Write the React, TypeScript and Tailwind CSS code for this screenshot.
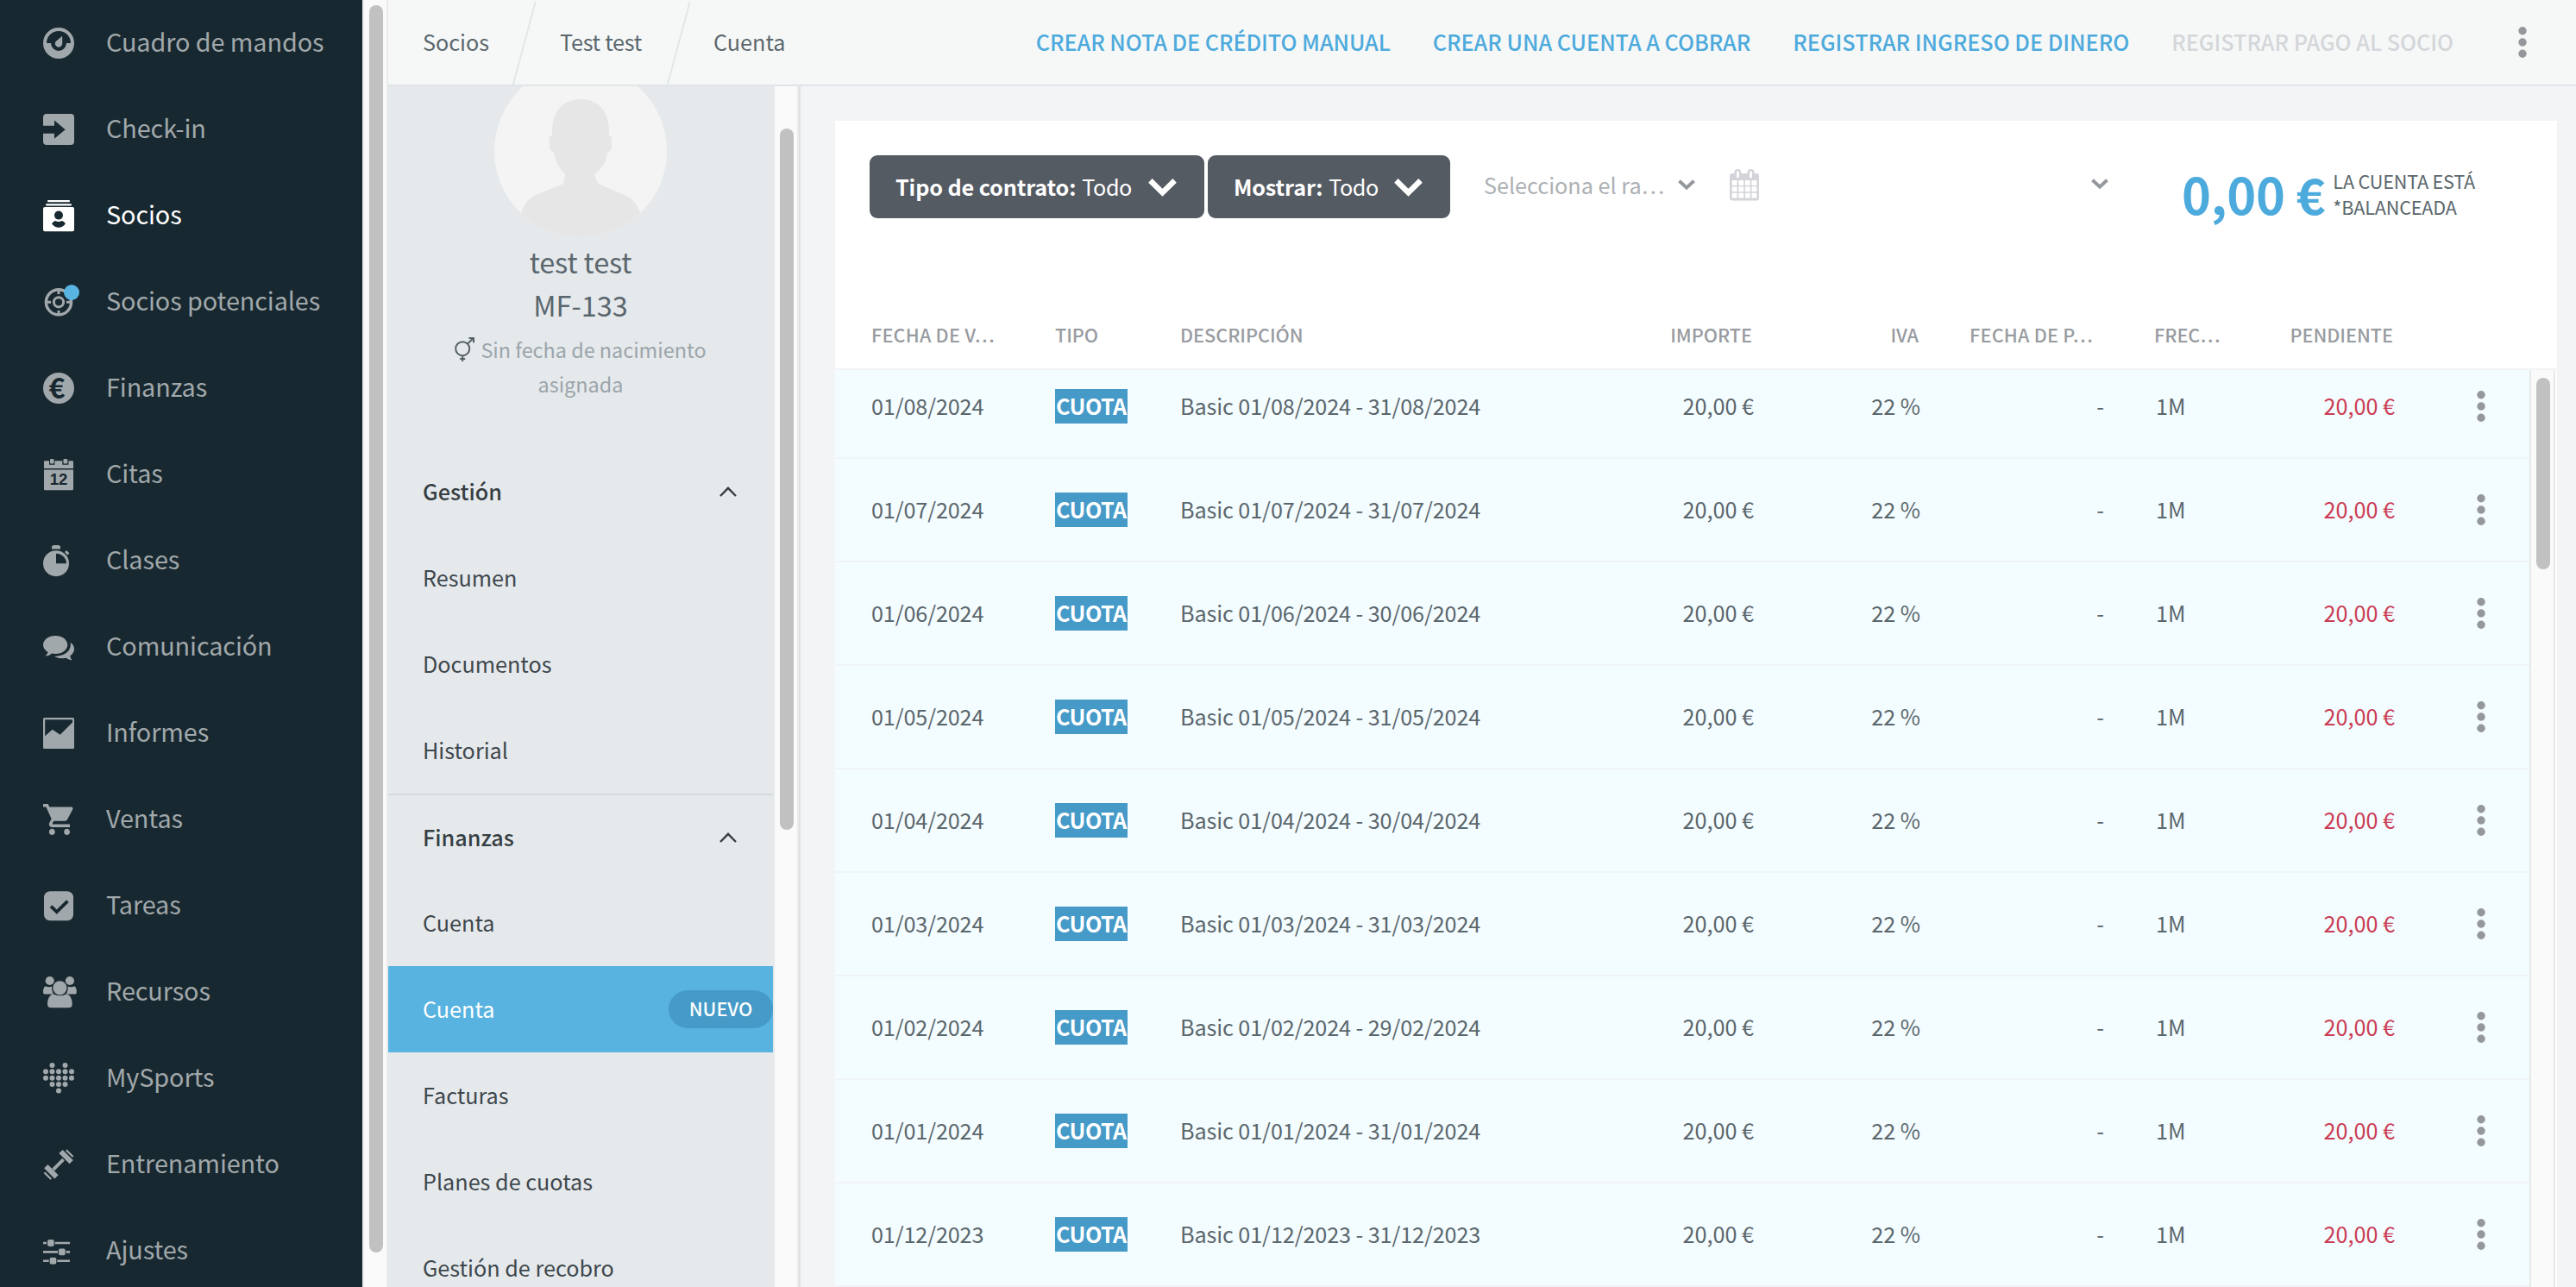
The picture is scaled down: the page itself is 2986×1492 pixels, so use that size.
import type { ReactNode } from "react";

const DARK = "#182830";

function NavIcon({ children }: { children: ReactNode }) {
  return (
    <svg viewBox="0 0 36 36" className="size-9 shrink-0 overflow-visible" fill="currentColor">
      {children}
    </svg>
  );
}

const heartRows = [[1, 3], [0, 1, 2, 3, 4], [0, 1, 2, 3, 4], [1, 2, 3], [2]];

const navItems: { label: string; active?: boolean; icon: ReactNode }[] = [
  {
    label: "Cuadro de mandos",
    icon: (
      <path
        fillRule="evenodd"
        d="M18 0a18 18 0 1 1 0 36a18 18 0 1 1 0-36zM4 18a14 14 0 0 1 28 0h-5a9 9 0 0 1-18 0zM22.2 9.7V19a4.2 4.2 0 1 1-7.5-3.1z"
      />
    ),
  },
  {
    label: "Check-in",
    icon: (
      <path d="M4 0H32a4 4 0 0 1 4 4V32a4 4 0 0 1-4 4H4a4 4 0 0 1-4-4V22.8H13V28.7L25.7 18.2L13 7.6V13.7H0V4a4 4 0 0 1 4-4z" />
    ),
  },
  {
    label: "Socios",
    active: true,
    icon: (
      <>
        <rect x="5" y="0" width="26" height="2.2" rx="1" />
        <rect x="3" y="4.2" width="30" height="2.4" rx="1" />
        <path
          fillRule="evenodd"
          d="M2 8H34a2 2 0 0 1 2 2V34.3a2 2 0 0 1-2 2H2a2 2 0 0 1-2-2V10a2 2 0 0 1 2-2zM18 12.6a5 5 0 1 0 0 10a5 5 0 1 0 0-10zM10 27.2Q12 24.2 14.3 24Q18 26 21.7 24Q24 24.2 26 27.2Q22.5 31.7 18 31.7T10 27.2z"
        />
      </>
    ),
  },
  {
    label: "Socios potenciales",
    icon: (
      <>
        <g fill="none" stroke="currentColor">
          <circle cx="18" cy="18.3" r="14.6" strokeWidth="3.4" />
          <circle cx="18" cy="18.3" r="5.6" strokeWidth="3" />
          <path d="M18 4v5M18 28v5M4 18.3h5M27 18.3h5" strokeWidth="3" />
        </g>
        <circle cx="33" cy="7" r="9" fill="#5ab4e2" />
      </>
    ),
  },
  {
    label: "Finanzas",
    icon: (
      <>
        <circle cx="18" cy="18" r="18" />
        <text x="16" y="29.8" textAnchor="middle" fontSize="32" fontWeight="700" fill={DARK}>€</text>
      </>
    ),
  },
  {
    label: "Citas",
    icon: (
      <>
        <path d="M2 2.3H7V6.7H13.4V2.3H22.3V6.7H29.4V2.3H34a1 1 0 0 1 1 1V11H1V3.3a1 1 0 0 1 1-1z" />
        <rect x="8" y="0" width="4.5" height="5.4" rx="1.2" />
        <rect x="23.5" y="0" width="4.7" height="5.4" rx="1.2" />
        <path d="M1 12.6H35V34.8a1.5 1.5 0 0 1-1.5 1.5H2.5A1.5 1.5 0 0 1 1 34.8z" />
        <text x="18" y="30.3" textAnchor="middle" fontSize="18.5" fontWeight="700" fill={DARK} className="font-['Liberation_Sans']">12</text>
      </>
    ),
  },
  {
    label: "Clases",
    icon: (
      <>
        <path d="M10 4.6V2.5a2.5 2.5 0 0 1 2.5-2.5H17.5a2.5 2.5 0 0 1 2.5 2.5V4.6z" />
        <path fillRule="evenodd" d="M15 6.2a15 15 0 1 1 0 30a15 15 0 1 1 0-30zM15 9.7V21.2H27A12 11.7 0 0 0 15 9.7z" />
        <path d="M26 7L29.4 10.4" stroke="currentColor" strokeWidth="3" />
      </>
    ),
  },
  {
    label: "Comunicación",
    icon: (
      <>
        <path d="M14.2 5C22.2 5 28.3 9.7 28.3 15.5S22.2 26 14.2 26C12.7 26 11.4 25.8 10.1 25.5C8 27.4 5.2 28.5 2.6 28.4C4.2 27 5.3 25.500 5.6 24C2.1 22 0 19 0 15.5C0 9.700 6.2 5 14.2 5z" />
        <path d="M31.6 12.8C34.3 14.6 36 17.2 36 20.4C36 23.6 34.3 26.2 31.3 28.2C31.5 30.2 32.2 31.5 33.5 33.4C31 33.2 28.6 32.2 26.8 30.8C21.5 31.7 16.8 31 13 28.9C25 29 33.400 22.5 31.6 12.8z" />
      </>
    ),
  },
  {
    label: "Informes",
    icon: (
      <path
        fillRule="evenodd"
        d="M1.5 0H34.5A1.5 1.5 0 0 1 36 1.5V34.5A1.5 1.5 0 0 1 34.5 36H1.5A1.5 1.5 0 0 1 0 34.5V1.5A1.5 1.5 0 0 1 1.5 0zM2.2 2.3V21.3L10.7 13.7L19.7 19.7L34 5.5V2.3z"
      />
    ),
  },
  {
    label: "Ventas",
    icon: (
      <svg viewBox="1 2 20.9 20" width="36" height="36" preserveAspectRatio="none">
        <path d="M7 18c-1.1 0-1.99.9-1.99 2S5.9 22 7 22s2-.9 2-2-.9-2-2-2zM1 2v2h2l3.6 7.59-1.35 2.45c-.16.28-.25.61-.25.96 0 1.1.9 2 2 2h12v-2H7.42c-.14 0-.25-.11-.25-.25l.03-.12.9-1.63h7.45c.75 0 1.41-.41 1.75-1.03l3.58-6.49c.08-.14.12-.31.12-.48 0-.55-.45-1-1-1H5.21l-.94-2H1zm16 16c-1.1 0-1.99.9-1.99 2s.89 2 1.99 2 2-.9 2-2-.9-2-2-2z" />
      </svg>
    ),
  },
  {
    label: "Tareas",
    icon: (
      <>
        <rect x="1" y="1.3" width="34" height="34" rx="7" />
        <path d="M9 18.6L15.8 25.2L28.4 12.6" fill="none" stroke={DARK} strokeWidth="3.8" />
      </>
    ),
  },
  {
    label: "Recursos",
    icon: (
      <>
        <circle cx="7.7" cy="5" r="5.1" />
        <circle cx="30.9" cy="5" r="5.1" />
        <path d="M2.5 11.3Q6 12.8 10.5 11.6Q9.8 17 12.2 20.6H2.5Q0 20.6 0 18Q0 13 2.5 11.3zM36.3 11.3Q32.8 12.8 28.2 11.6Q29 17 26.6 20.6H36.3Q38.8 20.6 38.8 18Q38.8 13 36.3 11.3z" />
        <circle cx="19.4" cy="13.3" r="8.7" stroke={DARK} strokeWidth="1.2" />
        <path d="M11.5 20.2Q19.4 24.5 27.3 20.2Q33.6 22 33.7 32Q33.7 36.3 29.5 36.3H9.3Q5 36.3 5 32Q5.2 22 11.5 20.2z" />
      </>
    ),
  },
  {
    label: "MySports",
    icon: (
      <>
        {heartRows.map((cols, r) =>
          cols.map((c) => <circle key={`${r}-${c}`} cx={3 + c * 7.5} cy={3 + r * 7.35} r="3" />),
        )}
      </>
    ),
  },
  {
    label: "Entrenamiento",
    icon: (
      <g stroke="currentColor">
        <path d="M11.8 23.8L23.5 12.1" strokeWidth="3.8" />
        <path d="M20.5 3L32.7 15.2M3.3 20.2L15.5 32.4" strokeWidth="6" />
        <path d="M26.8 1.2L34.6 9M1.4 27.2L9.2 35" strokeWidth="2.3" />
      </g>
    ),
  },
  {
    label: "Ajustes",
    icon: (
      <>
        <path d="M0 9H31M0 19.4H31M0 29.7H31" stroke="currentColor" strokeWidth="2.6" />
        <g stroke={DARK} strokeWidth="1">
          <rect x="4.6" y="4.6" width="8.6" height="8.8" rx="2.4" />
          <rect x="17.6" y="15" width="8.6" height="8.8" rx="2.4" />
          <rect x="7.2" y="25.3" width="8.6" height="8.8" rx="2.4" />
        </g>
      </>
    ),
  },
];

function Sidebar() {
  return (
    <nav className="w-[420px] shrink-0 overflow-hidden bg-[#182830]">
      {navItems.map((item) => (
        <div
          key={item.label}
          className={`flex h-[100px] items-center gap-9 pl-[50px] ${item.active ? "text-white" : "text-[#a1a8ab]"}`}
        >
          <NavIcon>{item.icon}</NavIcon>
          <span className="pb-[5px] pl-px text-[28.8px] tracking-[-0.09px] whitespace-nowrap">{item.label}</span>
        </div>
      ))}
    </nav>
  );
}

function Slash() {
  return (
    <svg viewBox="0 0 28 98" className="h-[98px] w-7 shrink-0" fill="none">
      <path d="M26.7 2L0.8 98" stroke="#dfe5e8" strokeWidth="1.8" />
    </svg>
  );
}

function Dots() {
  return (
    <svg viewBox="0 0 10 36" className="h-9 w-2.5 shrink-0" fill="#94979c">
      <circle cx="5" cy="4.8" r="4.7" />
      <circle cx="5" cy="18" r="4.7" />
      <circle cx="5" cy="31.3" r="4.7" />
    </svg>
  );
}

function Header() {
  return (
    <header className="flex h-[100px] shrink-0 items-center border-b-2 border-[#dfe5e8] bg-[#f6f8f7] text-[25.2px] whitespace-nowrap">
      <div className="flex items-center text-[#5b676d]">
        <span className="w-[144px] pl-10">Socios</span>
        <Slash />
        <span className="w-[151px] pl-[27px] tracking-[-0.27px]">Test test</span>
        <Slash />
        <span className="pl-[26px]">Cuenta</span>
      </div>
      <div className="ml-auto flex items-center gap-[49px] font-medium text-[#4daadd]">
        <span className="tracking-[-0.04px]">CREAR NOTA DE CRÉDITO MANUAL</span>
        <span>CREAR UNA CUENTA A COBRAR</span>
        <span>REGISTRAR INGRESO DE DINERO</span>
        <span className="text-[#d4d6da]">REGISTRAR PAGO AL SOCIO</span>
      </div>
      <div className="ml-[75px] w-[67px]">
        <Dots />
      </div>
    </header>
  );
}

function Avatar() {
  return (
    <svg viewBox="0 0 200 200" className="mx-auto -mt-[25px] block size-[200px]">
      <clipPath id="avatar-circle">
        <circle cx="100" cy="100" r="100" />
      </clipPath>
      <g clipPath="url(#avatar-circle)">
        <rect width="200" height="200" fill="#f4f4f4" />
        <path
          fill="#e6e6e6"
          d="M100 40C120 40 133 54 133 76V83H136V93Q136 101 131.5 101Q129 119 116 126.7Q117.5 133 121 138.3L152 151.5Q164 157 169.5 172L170 200H30L30.7 172Q36 157 47 151.5L79.6 138.3Q81.5 133 82.3 126.7Q71.5 118 69 101Q63.8 101 63.8 93V83H67V76C67 54 80 40 100 40z"
        />
      </g>
    </svg>
  );
}

function ChevronUp() {
  return (
    <svg viewBox="0 0 20 12" className="h-3 w-5" fill="none">
      <path d="M1 11L10 1.8L19 11" stroke="#363e42" strokeWidth="2.4" />
    </svg>
  );
}

function SectionTitle({ label, className }: { label: string; className: string }) {
  return (
    <div className={`flex items-center justify-between pr-[42px] pl-10 text-[#363e42] ${className}`}>
      <span className="text-[25.2px] font-medium">{label}</span>
      <ChevronUp />
    </div>
  );
}

function MenuItem({ label, badge }: { label: string; badge?: string }) {
  return (
    <div
      className={`flex h-[100px] items-center justify-between pl-10 text-[25.2px] ${badge ? "bg-[#59b3e0] text-white" : "text-[#3e474c]"}`}
    >
      <span>{label}</span>
      {badge && (
        <span className="flex h-11 w-[121px] items-center justify-center rounded-full bg-[#459ac8] pb-px text-[21.6px] font-medium">
          {badge}
        </span>
      )}
    </div>
  );
}

function MemberPanel() {
  return (
    <aside className="w-[448px] shrink-0 overflow-hidden bg-[#e5e9ec] pr-[2px] whitespace-nowrap">
      <Avatar />
      <div className="mt-[3px] text-center text-[32.4px] leading-[50px] text-[#5b676d]">
        <div className="tracking-[-0.15px]">test test</div>
        <div>MF-133</div>
      </div>
      <div className="mt-[7px] text-center text-[23.4px] leading-10 text-[#9ba5aa]">
        <div className="flex items-center justify-center gap-[7px]">
          <svg viewBox="0 0 23 28" className="h-7 w-[23px]" fill="none" stroke="#555f65" strokeWidth="2">
            <circle cx="9.2" cy="13.2" r="8" />
            <path d="M9.2 21.2V28M6.2 25H12.2M15 7.5L21.5 1.2M16.5 1H22V6.3" />
          </svg>
          <span>Sin fecha de nacimiento</span>
        </div>
        <div>asignada</div>
      </div>
      <SectionTitle label="Gestión" className="mt-[55px] h-[100px]" />
      <MenuItem label="Resumen" />
      <MenuItem label="Documentos" />
      <MenuItem label="Historial" />
      <SectionTitle label="Finanzas" className="h-[100px] border-t-2 border-[#d3dadd]" />
      <MenuItem label="Cuenta" />
      <MenuItem label="Cuenta" badge="NUEVO" />
      <MenuItem label="Facturas" />
      <MenuItem label="Planes de cuotas" />
      <MenuItem label="Gestión de recobro" />
    </aside>
  );
}

function BigChevron() {
  return (
    <svg viewBox="0 0 33 21" className="mt-px h-[21px] w-[33px]" fill="none">
      <path d="M2.4 2.4L16.5 16.2L30.6 2.4" stroke="white" strokeWidth="6.4" />
    </svg>
  );
}

function SmallChevron() {
  return (
    <svg viewBox="0 0 20 13" className="h-[13px] w-5" fill="none">
      <path d="M1.5 1.8L10 9.6L18.5 1.8" stroke="#94979c" strokeWidth="4" />
    </svg>
  );
}

function FilterButton({ name, className }: { name: string; className: string }) {
  return (
    <button
      className={`flex h-[73px] items-center justify-between rounded-[9px] bg-[#555b63] pr-8 pl-[30px] text-white ${className}`}
    >
      <span className="flex gap-[7px]">
        <b className="tracking-[-0.13px]">{name}</b>
        <span className="tracking-[-0.4px]">Todo</span>
      </span>
      <BigChevron />
    </button>
  );
}

function CalendarIcon() {
  return (
    <svg viewBox="0 0 34 37" className="h-[37px] w-[34px]">
      <rect x="0" y="5" width="34" height="31.5" rx="3" fill="#d3d4d9" />
      {[9.4, 24.5].map((x) => (
        <g key={x}>
          <rect x={x - 4} y="0" width="8" height="11.5" rx="4" fill="#d3d4d9" />
          <rect x={x - 1.4} y="2.5" width="2.8" height="8" rx="1.4" fill="white" />
        </g>
      ))}
      {[13, 20.3, 27.7].map((y) =>
        [2.6, 10.3, 17.9, 25.5].map((x) => <rect key={`${x}-${y}`} x={x} y={y} width="5.9" height="5.9" fill="white" />),
      )}
    </svg>
  );
}

function Toolbar() {
  return (
    <div className="flex h-[197px] items-start pt-10 pl-10 text-[25.2px] whitespace-nowrap">
      <FilterButton name="Tipo de contrato:" className="w-[388px]" />
      <FilterButton name="Mostrar:" className="ml-1 w-[281px]" />
      <div className="ml-[39px] flex h-[73px] items-center pb-[4px]">
        <span className="w-[225px] text-[#adb0b3]">Selecciona el ra…</span>
        <SmallChevron />
      </div>
      <div className="mt-4 ml-10">
        <CalendarIcon />
      </div>
      <div className="mt-[27px] ml-[385px]">
        <SmallChevron />
      </div>
      <div className="mt-[6px] ml-[85px] flex items-start">
        <span className="-mt-[3px] text-[57.6px] leading-[83px] font-bold tracking-[-0.23px] text-[#4daadd]">0,00 €</span>
        <span className="mt-[9px] ml-[9px] text-[21.6px] leading-[30px] tracking-[-0.18px] text-[#5b676d]">
          LA CUENTA ESTÁ
          <br />
          *BALANCEADA
        </span>
      </div>
    </div>
  );
}

const gridCols =
  "grid grid-cols-[214px_145px_457px_208px_193px_213px_59px_278px_1fr] items-center pl-[41px] whitespace-nowrap";

function TableHead() {
  return (
    <div className={`${gridCols} h-[92px] border-b-2 border-[#f1f3f5] pt-3 text-[21.6px] font-medium text-[#989ba0]`}>
      <span className="pl-px tracking-[0.2px]">FECHA DE V…</span>
      <span>TIPO</span>
      <span>DESCRIPCIÓN</span>
      <span className="pr-[2px] text-right">IMPORTE</span>
      <span className="pr-[2px] text-right">IVA</span>
      <span className="pr-[13px] text-right tracking-[0.2px]">FECHA DE P…</span>
      <span />
      <span className="flex justify-between pr-[2px]">
        <span className="-ml-px">FREC…</span>
        <span>PENDIENTE</span>
      </span>
    </div>
  );
}

const periods: [string, string][] = [
  ["01/08/2024", "31/08/2024"],
  ["01/07/2024", "31/07/2024"],
  ["01/06/2024", "30/06/2024"],
  ["01/05/2024", "31/05/2024"],
  ["01/04/2024", "30/04/2024"],
  ["01/03/2024", "31/03/2024"],
  ["01/02/2024", "29/02/2024"],
  ["01/01/2024", "31/01/2024"],
  ["01/12/2023", "31/12/2023"],
];

function Row({ from, to }: { from: string; to: string }) {
  return (
    <div
      className={`${gridCols} h-[120px] shrink-0 border-b-2 border-[#f0f4f6] bg-[#f3fcff] text-[25.2px] text-[#5b676d]`}
    >
      <span className="pl-px tracking-[-0.13px]">{from}</span>
      <span className="flex h-10 w-[84px] items-center bg-[#459ac8] pl-px font-bold tracking-[-0.5px] text-white">
        CUOTA
      </span>
      <span className="tracking-[-0.1px]">
        Basic {from} - {to}
      </span>
      <span className="text-right">20,00 €</span>
      <span className="text-right">22 %</span>
      <span className="text-right">-</span>
      <span />
      <span className="flex justify-between">
        <span className="pl-px">1M</span>
        <span className="text-[#cb3d54]">20,00 €</span>
      </span>
      <span className="pl-[95px]">
        <Dots />
      </span>
    </div>
  );
}

function AccountCard() {
  return (
    <section className="mt-10 mr-[22px] ml-10 flex min-w-0 flex-1 flex-col overflow-hidden bg-white">
      <Toolbar />
      <TableHead />
      <div className="flex min-h-0 flex-1">
        <div className="flex min-w-0 flex-1 flex-col overflow-hidden">
          <div className="-mt-[17px]">
            {periods.map(([from, to]) => (
              <Row key={from} from={from} to={to} />
            ))}
          </div>
        </div>
        <div className="mr-[2px] w-[30px] border-x-2 border-[#e8e8e8] bg-[#fafafa] pt-[9px] pl-[6px]">
          <div className="h-[222px] w-4 rounded-full bg-[#c1c1c1]" />
        </div>
      </div>
    </section>
  );
}

export default function App() {
  return (
    <div className="flex h-[1492px] w-[2986px] overflow-hidden bg-[#f3f4f6] font-['Noto_Sans_CJK_SC',sans-serif]">
      <Sidebar />
      <div className="w-[30px] shrink-0 border-x-2 border-[#ebebeb] bg-[#fafafa] pt-[6px] pl-[6px]">
        <div className="h-[1446px] w-4 rounded-full bg-[#c1c1c1]" />
      </div>
      <div className="flex min-w-0 flex-1 flex-col">
        <Header />
        <div className="flex min-h-0 flex-1">
          <MemberPanel />
          <div className="w-[28px] shrink-0 border-r-2 border-[#ebebeb] bg-[#fafafa] pt-[49px] pl-[6px]">
            <div className="h-[813px] w-4 rounded-full bg-[#c1c1c1]" />
          </div>
          <div className="w-[2px] shrink-0 bg-[#dfe2e4]" />
          <AccountCard />
        </div>
      </div>
    </div>
  );
}
